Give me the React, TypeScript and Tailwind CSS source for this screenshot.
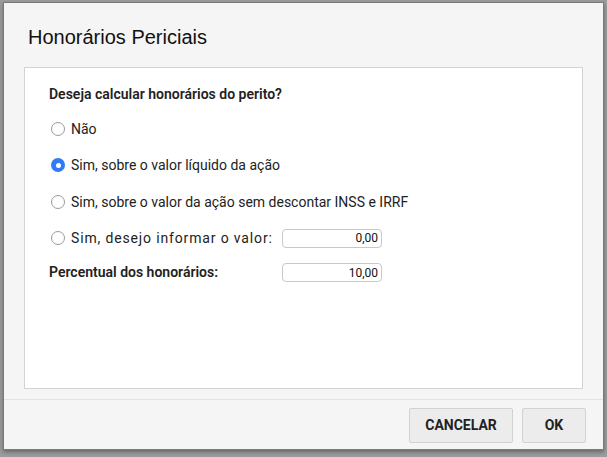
import React from "react";

function Radio({ checked }: { checked?: boolean }) {
  return checked ? (
    <span className="flex h-[14px] w-[14px] shrink-0 items-center justify-center rounded-full bg-[#2f7cf6]">
      <span className="h-[5px] w-[5px] rounded-full bg-white" />
    </span>
  ) : (
    <span className="h-[14px] w-[14px] shrink-0 rounded-full border border-[#9a9a9a] bg-white" />
  );
}

function Row({ checked, label, wide }: { checked?: boolean; label: string; wide?: boolean }) {
  return (
    <div className="flex h-[20px] items-center gap-[6px] pl-[2px]">
      <Radio checked={checked} />
      <span className={wide ? "tracking-[0.85px]" : ""}>{label}</span>
    </div>
  );
}

function Input({ value }: { value: string }) {
  return (
    <div className="flex h-[19px] w-[100px] items-center justify-end rounded-[4px] border border-[#c8c8c8] bg-white pr-[3px] text-[12px] text-[#111]">
      {value}
    </div>
  );
}

export default function App() {
  return (
    <div className="h-[457px] w-[607px] overflow-hidden bg-[#9c9c9c] pl-[3px] pt-[2px]">
      <div className="flex h-[448px] w-[601px] flex-col border border-[#7a7a7a] bg-[#f5f5f5] shadow-[0_2px_4px_rgba(0,0,0,0.35)]">
        <div
          className="h-[64px] pl-[24px] pt-[22px] text-[20px] leading-[24px] text-[#111]"
          style={{ fontFamily: '"Liberation Sans", Arial, sans-serif' }}
        >
          Honorários Periciais
        </div>
        <div className="mx-[20px] h-[322px] border border-[#d4d4d4] bg-white">
          <div
            className="flex flex-col pl-[24px] pt-[16px] text-[14px] text-[#222]"
            style={{ fontFamily: 'Roboto, "Noto Sans", sans-serif' }}
          >
            <div className="h-[20px] font-semibold leading-[20px]">
              Deseja calcular honorários do perito?
            </div>
            <div className="mt-[15px]">
              <Row label="Não" />
            </div>
            <div className="mt-[16px]">
              <Row checked label="Sim, sobre o valor líquido da ação" />
            </div>
            <div className="mt-[17px]">
              <Row label="Sim, sobre o valor da ação sem descontar INSS e IRRF" />
            </div>
            <div className="mt-[16px] flex items-center">
              <div className="w-[233px]">
                <Row wide label="Sim, desejo informar o valor:" />
              </div>
              <Input value="0,00" />
            </div>
            <div className="mt-[14px] flex items-center">
              <div className="w-[233px] font-semibold">Percentual dos honorários:</div>
              <Input value="10,00" />
            </div>
          </div>
        </div>
        <div className="mt-[10px] border-t border-[#e2e2e2]" />
        <div
          className="flex justify-end gap-[9px] pr-[17px] pt-[8px]"
          style={{ fontFamily: 'Roboto, "Noto Sans", sans-serif' }}
        >
          <button className="h-[35px] w-[104px] rounded-[2px] border border-[#d2d2d2] bg-[#ececec] text-[14px] font-bold text-[#222]">
            CANCELAR
          </button>
          <button className="h-[35px] w-[64px] rounded-[2px] border border-[#d2d2d2] bg-[#ececec] text-[14px] font-bold text-[#222]">
            OK
          </button>
        </div>
      </div>
    </div>
  );
}
